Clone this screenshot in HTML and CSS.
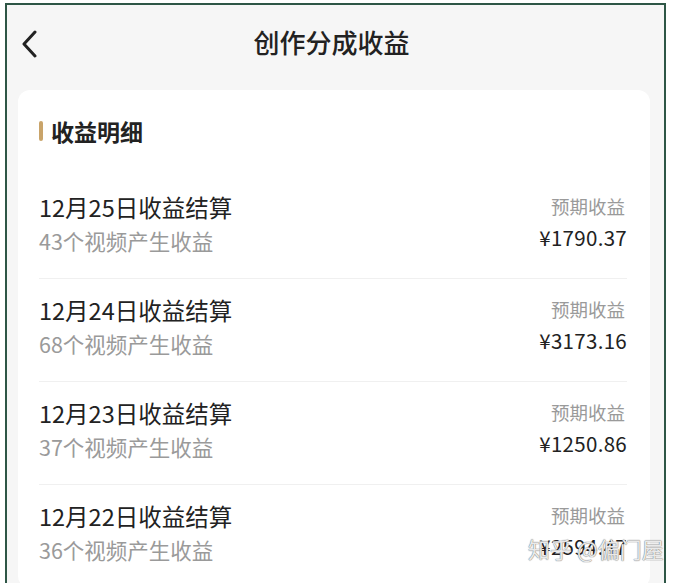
FILE: index.html
```html
<!DOCTYPE html>
<html lang="zh-CN">
<head>
    <meta charset="UTF-8">
    <meta name="viewport" content="width=device-width, initial-scale=1.0">
    <title>创作分成收益</title>
    <link rel="stylesheet" href="styles.css">
</head>
<body>
    <div class="frame">
        <div class="header">
            <span class="back">
                <svg width="16" height="28" viewBox="0 0 16 28"><path d="M14 2 L3 14 L14 26" fill="none" stroke="#222" stroke-width="3" stroke-linecap="round" stroke-linejoin="round"/></svg>
            </span>
            <h1>创作分成收益</h1>
        </div>

        <div class="card">
            <h2 class="section-title">收益明细</h2>

            <div class="row">
                <div class="left">
                    <div class="title">12月25日收益结算</div>
                    <div class="sub">43个视频产生收益</div>
                </div>
                <div class="right">
                    <div class="label">预期收益</div>
                    <div class="amount">¥1790.37</div>
                </div>
            </div>
            <div class="row">
                <div class="left">
                    <div class="title">12月24日收益结算</div>
                    <div class="sub">68个视频产生收益</div>
                </div>
                <div class="right">
                    <div class="label">预期收益</div>
                    <div class="amount">¥3173.16</div>
                </div>
            </div>
            <div class="row">
                <div class="left">
                    <div class="title">12月23日收益结算</div>
                    <div class="sub">37个视频产生收益</div>
                </div>
                <div class="right">
                    <div class="label">预期收益</div>
                    <div class="amount">¥1250.86</div>
                </div>
            </div>
            <div class="row">
                <div class="left">
                    <div class="title">12月22日收益结算</div>
                    <div class="sub">36个视频产生收益</div>
                </div>
                <div class="right">
                    <div class="label">预期收益</div>
                    <div class="amount">¥2594.47</div>
                </div>
            </div>
        </div>
    </div>

    <div class="watermark">知乎 @偏门屋</div>
</body>
</html>
```

FILE: styles.css
```css
body {
    margin: 0;
    padding: 0;
    background-color: #ffffff;
    font-family: "Noto Sans CJK SC", "Noto Sans", sans-serif;
    overflow: hidden;
    height: 583px;
}

.frame {
    width: 657px;
    height: 580px;
    margin: 3px 0 0 5px;
    border: 2px solid #2e5646;
    border-bottom: none;
    background-color: #f6f6f6;
    overflow: hidden;
}

.header {
    position: relative;
    height: 85px;
    display: flex;
    align-items: center;
    justify-content: center;
}

.header h1 {
    margin: 0 8px 13px 0;
    font-size: 26px;
    font-weight: 500;
    color: #222;
}

.back {
    position: absolute;
    left: 14px;
    top: 25px;
}

.card {
    margin: 0 14px 0 11px;
    background-color: #ffffff;
    border-radius: 12px;
    padding: 28px 23px 0 21px;
}

.section-title {
    margin: 0;
    font-size: 23px;
    line-height: 26px;
    font-weight: 700;
    color: #222;
    display: flex;
    align-items: center;
}

.section-title::before {
    content: "";
    width: 4px;
    height: 20px;
    border-radius: 2px;
    background-color: #c9a46a;
    margin-right: 8px;
}

.row {
    display: flex;
    justify-content: space-between;
    padding: 14px 0 20px 0;
    border-bottom: 1px solid #f0f0f0;
}

.row:first-of-type {
    margin-top: 32px;
}

.title {
    font-size: 23.5px;
    line-height: 34px;
    color: #222;
}

.sub {
    font-size: 21.5px;
    line-height: 34px;
    color: #9a9a9a;
}

.right {
    text-align: right;
}

.label {
    font-size: 18.5px;
    line-height: 32px;
    color: #9a9a9a;
    padding-right: 2px;
}

.amount {
    font-size: 20.5px;
    line-height: 30px;
    color: #222;
    letter-spacing: 0.3px;
}

.watermark {
    position: absolute;
    left: 528px;
    top: 532px;
    font-size: 22px;
    color: rgba(255, 255, 255, 0.85);
    text-shadow: 0 0 1px #777, 0 0 1px #777;
}
```
